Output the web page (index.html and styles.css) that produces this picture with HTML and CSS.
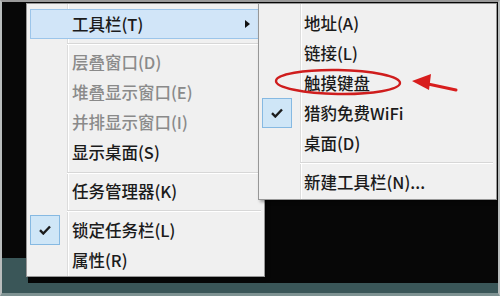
FILE: index.html
```html
<!DOCTYPE html>
<html lang="zh-CN">
<head>
<meta charset="utf-8">
<title>任务栏菜单</title>
<link rel="stylesheet" href="styles.css">
</head>
<body>
<div class="screen">
  <div class="desk"></div>
  <div class="notch"></div>

  <div class="menu main-menu">
    <div class="item hot">
      <span class="icon"></span><span class="label">工具栏(T)</span><span class="arrow"></span>
    </div>
    <div class="sep"></div>
    <div class="item off"><span class="icon"></span><span class="label">层叠窗口(D)</span></div>
    <div class="item off"><span class="icon"></span><span class="label">堆叠显示窗口(E)</span></div>
    <div class="item off"><span class="icon"></span><span class="label">并排显示窗口(I)</span></div>
    <div class="item"><span class="icon"></span><span class="label">显示桌面(S)</span></div>
    <div class="sep"></div>
    <div class="item"><span class="icon"></span><span class="label">任务管理器(K)</span></div>
    <div class="sep"></div>
    <div class="item"><span class="icon check"><svg width="12" height="10" viewBox="0 0 12 10"><path d="M1 5.2 L4.3 8.5 L11 1.5" fill="none" stroke="#1c1c1c" stroke-width="2.4"/></svg></span><span class="label">锁定任务栏(L)</span></div>
    <div class="item"><span class="icon"></span><span class="label">属性(R)</span></div>
  </div>

  <div class="menu sub-menu">
    <div class="item"><span class="icon"></span><span class="label">地址(A)</span></div>
    <div class="item"><span class="icon"></span><span class="label">链接(L)</span></div>
    <div class="item"><span class="icon"></span><span class="label">触摸键盘</span></div>
    <div class="item"><span class="icon check"><svg width="12" height="10" viewBox="0 0 12 10"><path d="M1 5.2 L4.3 8.5 L11 1.5" fill="none" stroke="#1c1c1c" stroke-width="2.4"/></svg></span><span class="label">猎豹免费WiFi</span></div>
    <div class="item"><span class="icon"></span><span class="label">桌面(D)</span></div>
    <div class="sep"></div>
    <div class="item"><span class="icon"></span><span class="label">新建工具栏(N)...</span></div>
  </div>

  <svg class="mark" width="500" height="296" viewBox="0 0 500 296">
    <ellipse cx="338" cy="82" rx="62" ry="12" fill="none" stroke="#cf1d1d" stroke-width="2.4" transform="rotate(1 338 82)"/>
    <path d="M428 84 L456 90" stroke="#d81e1e" stroke-width="3" stroke-linecap="round"/>
    <path d="M412 81 L431 74 L429 90 Z" fill="#d81e1e"/>
  </svg>
</div>
</body>
</html>
```

FILE: styles.css
```css
* { box-sizing: border-box; }

html, body {
  margin: 0;
  padding: 0;
}

body {
  width: 500px;
  height: 296px;
  overflow: hidden;
  background: #c4c8c8;
  font-family: "Noto Sans CJK SC", "Microsoft YaHei", sans-serif;
}

.screen {
  position: relative;
  width: 500px;
  height: 296px;
  border: 2px solid #b9bdbd;
  border-top-color: #9a9a9a;
  border-bottom: 3px solid #7e9292;
  background: #3a5658;
  overflow: hidden;
}

.desk {
  position: absolute;
  left: 0;
  top: 0;
  right: 0;
  height: 281px;
  background: #070707;
}

.notch {
  position: absolute;
  left: 0;
  top: 256px;
  width: 26px;
  height: 30px;
  background: #3a5658;
}

.menu {
  position: absolute;
  top: 1px;
  width: 239px;
  display: flex;
  flex-direction: column;
  padding: 5px 3px 1px 3px;
  background-color: #f0f0f0;
  border: 1px solid #979797;
  box-shadow: 2px 2px 3px rgba(0, 0, 0, 0.35);
}

.main-menu {
  left: 24px;
  height: 274px;
  background-image: linear-gradient(to right, transparent 40px, #dcdcdc 40px, #dcdcdc 41px, #ffffff 41px, #ffffff 42px, transparent 42px);
}

.sub-menu {
  left: 256px;
  height: 197px;
  padding-top: 4px;
  background-image: linear-gradient(to right, transparent 41px, #dcdcdc 41px, #dcdcdc 42px, #ffffff 42px, #ffffff 43px, transparent 43px);
}

.item {
  display: flex;
  align-items: center;
  height: 30px;
  font-size: 16.5px;
  font-weight: 500;
  color: #1b1b1b;
  border: 1px solid transparent;
}

.item .icon {
  flex: 0 0 30px;
  height: 30px;
  margin: -1px 12px -1px -1px;
  display: flex;
  align-items: center;
  justify-content: center;
}

.item .icon.check {
  background: #cfe6f7;
  border: 1px solid #86b9e2;
}

.item .label {
  white-space: nowrap;
  line-height: 1;
}

.item.off {
  color: #8a8a8a;
}

.item.hot {
  background: #d1e5f8;
  border-color: #9cc5ea;
}

.arrow {
  margin-left: auto;
  margin-right: 10px;
  width: 0;
  height: 0;
  border-top: 4px solid transparent;
  border-bottom: 4px solid transparent;
  border-left: 5px solid #111;
}

.sep {
  height: 1px;
  margin: 4px 0 4px 37px;
  background: #d7d7d7;
  box-shadow: 0 1px 0 #ffffff;
}

.sub-menu .sep {
  margin-left: 38px;
}

.mark {
  position: absolute;
  left: -2px;
  top: -2px;
  pointer-events: none;
}
```
